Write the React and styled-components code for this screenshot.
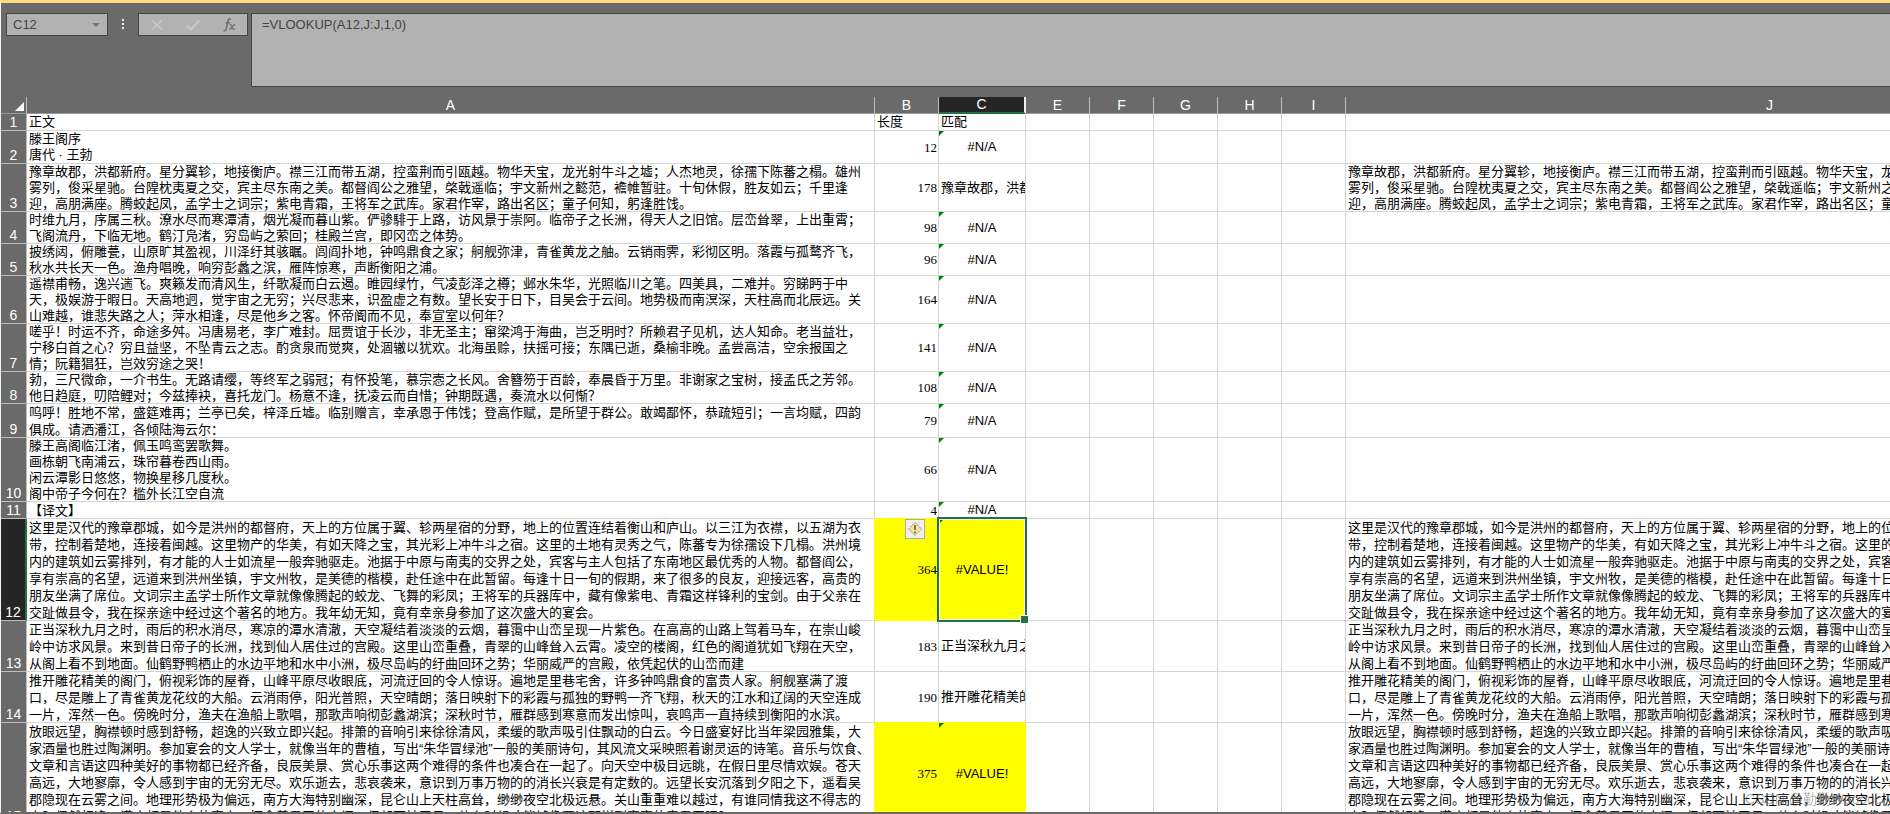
import React from "react";
import styled, { createGlobalStyle, css } from "styled-components";

const GlobalStyle = createGlobalStyle`
  * { box-sizing: border-box; }
  html, body { margin: 0; padding: 0; }
  body {
    overflow: hidden;
    background: #6a6a6a;
    font-family: "Liberation Sans", "Noto Sans CJK SC", sans-serif;
    font-size: 13px;
  }
`;

const LINE = "#d4d4d4";

const App_ = styled.div`
  display: flex;
  flex-direction: column;
  height: 100vh;
  border-left: 1px solid #f4f4f4;
  border-top: 3px solid #ffdc7d;
  border-bottom: 2px solid #6a6a6a;
  overflow: hidden;
`;

const FormulaBar = styled.header`
  display: flex;
  align-items: flex-start;
  flex: none;
  height: 94px;
  padding: 10px 0 0 5px;
  background: #6a6a6a;
`;

const BoxFrame = css`
  border: 1px solid #444;
  background: #b2b2b2;
`;

const NameBox = styled.div`
  ${BoxFrame}
  display: flex;
  align-items: center;
  width: 102px;
  height: 23px;
`;

const NameInput = styled.input`
  flex: 1;
  min-width: 0;
  height: 21px;
  padding: 0 0 0 6px;
  border: 0;
  outline: 0;
  background: transparent;
  color: #444;
  font: 13px "Liberation Sans", sans-serif;
`;

const IconButton = styled.button`
  display: flex;
  align-items: center;
  justify-content: center;
  width: ${(p) => p.$w}px;
  height: 21px;
  padding: 0;
  border: 0;
  background: transparent;
`;

const Grip = styled.div`
  display: flex;
  flex-direction: column;
  align-items: center;
  gap: 2px;
  width: 30px;
  padding-top: 6px;
  i { width: 2px; height: 2px; background: #eee; }
`;

const Tools = styled.div`
  ${BoxFrame}
  display: flex;
  width: 110px;
  height: 23px;
`;

const FormulaInput = styled.textarea`
  ${BoxFrame}
  flex: 1;
  height: 74px;
  margin-left: 3px;
  padding: 2px 10px;
  border-right: 0;
  outline: 0;
  resize: none;
  color: #444;
  font: 13px/17px "Liberation Sans", sans-serif;
`;

const SheetArea = styled.main`
  flex: 1;
  min-height: 0;
  overflow: hidden;
  background: #fff;
`;

const Grid = styled.table`
  width: 2167px;
  table-layout: fixed;
  border-collapse: separate;
  border-spacing: 0;
`;

const ColHead = styled.th`
  height: 17px;
  padding: 0;
  border-right: 1px solid #bdbdbd;
  border-bottom: 1px solid #9a9a9a;
  background: #6a6a6a;
  color: #fff;
  font-size: 14px;
  font-weight: 400;
  line-height: 16px;
  ${(p) => p.$active && css`
    background: #252525;
    border-right: 2px solid #f0f0f0;
    border-bottom: 2px solid #217346;
    line-height: 15px;
  `}
`;

const Corner = styled.th`
  padding: 0;
  border-right: 1px solid #bdbdbd;
  border-bottom: 1px solid #9a9a9a;
  background: #6a6a6a;
  svg { display: block; margin: 2px 0 0 14px; }
`;

const RowHead = styled.th`
  height: ${(p) => p.$h}px;
  padding: 0;
  border-right: 1px solid #bdbdbd;
  border-bottom: 1px solid #bdbdbd;
  background: #6a6a6a;
  color: #fff;
  font-size: 14px;
  font-weight: 400;
  line-height: 16px;
  vertical-align: bottom;
  ${(p) => p.$active && css`
    background: #252525;
    border-right: 2px solid #217346;
  `}
`;

const Cell = styled.td`
  position: relative;
  padding: 0;
  border-right: 1px solid ${LINE};
  border-bottom: 1px solid ${LINE};
  color: #000;
  vertical-align: middle;
  ${(p) => p.$filled && css`
    background: #ff0;
    border-color: #ff0;
    box-shadow: -1px -1px 0 #ff0;
  `}
`;

const Content = styled.div`
  max-height: ${(p) => p.$h - 1}px;
  padding: 0 2px;
  overflow: hidden;
  white-space: pre;
  line-height: ${(p) => p.$line || 16}px;
  text-align: ${(p) => p.$align || "left"};
  text-spacing-trim: space-all;
`;

const Passage = styled(Content)`
  height: ${(p) => p.$h - 1}px;
`;

const Count = styled(Content)`
  padding: 1px 1px 0;
  font-family: "Liberation Serif", serif;
  text-align: right;
`;

const ErrorFlag = styled.i`
  position: absolute;
  top: 0;
  left: 0;
  border-top: 5px solid #008000;
  border-right: 5px solid transparent;
`;

const Selection = styled.div`
  position: absolute;
  inset: -2px;
  border: 2px solid #217346;
  box-shadow: inset 0 0 0 1px #fff;
  z-index: 2;
  &::after {
    content: "";
    position: absolute;
    right: -4px;
    bottom: -4px;
    width: 7px;
    height: 7px;
    border: 1px solid #fff;
    background: #217346;
  }
`;

const SmartTag = styled.button`
  position: absolute;
  top: 0;
  left: 30px;
  display: flex;
  align-items: center;
  justify-content: center;
  width: 20px;
  height: 20px;
  padding: 0;
  border: 1px solid #ababab;
  background: #f0f0f0;
`;

const Watermark = styled.div`
  position: fixed;
  right: 8px;
  bottom: 6px;
  color: rgba(120, 120, 120, 0.55);
  font-size: 14px;
  line-height: 18px;
`;

const t = (...lines) => lines.join("\n");

const p3 = t(
  "豫章故郡，洪都新府。星分翼轸，地接衡庐。襟三江而带五湖，控蛮荆而引瓯越。物华天宝，龙光射牛斗之墟；人杰地灵，徐孺下陈蕃之榻。雄州",
  "雾列，俊采星驰。台隍枕夷夏之交，宾主尽东南之美。都督阎公之雅望，棨戟遥临；宇文新州之懿范，襜帷暂驻。十旬休假，胜友如云；千里逢",
  "迎，高朋满座。腾蛟起凤，孟学士之词宗；紫电青霜，王将军之武库。家君作宰，路出名区；童子何知，躬逢胜饯。"
);
const p12 = t(
  "这里是汉代的豫章郡城，如今是洪州的都督府，天上的方位属于翼、轸两星宿的分野，地上的位置连结着衡山和庐山。以三江为衣襟，以五湖为衣",
  "带，控制着楚地，连接着闽越。这里物产的华美，有如天降之宝，其光彩上冲牛斗之宿。这里的土地有灵秀之气，陈蕃专为徐孺设下几榻。洪州境",
  "内的建筑如云雾排列，有才能的人士如流星一般奔驰驱走。池据于中原与南夷的交界之处，宾客与主人包括了东南地区最优秀的人物。都督阎公，",
  "享有崇高的名望，远道来到洪州坐镇，宇文州牧，是美德的楷模，赴任途中在此暂留。每逢十日一旬的假期，来了很多的良友，迎接远客，高贵的",
  "朋友坐满了席位。文词宗主孟学士所作文章就像像腾起的蛟龙、飞舞的彩凤；王将军的兵器库中，藏有像紫电、青霜这样锋利的宝剑。由于父亲在",
  "交趾做县令，我在探亲途中经过这个著名的地方。我年幼无知，竟有幸亲身参加了这次盛大的宴会。"
);
const p13 = t(
  "正当深秋九月之时，雨后的积水消尽，寒凉的潭水清澈，天空凝结着淡淡的云烟，暮霭中山峦呈现一片紫色。在高高的山路上驾着马车，在崇山峻",
  "岭中访求风景。来到昔日帝子的长洲，找到仙人居住过的宫殿。这里山峦重叠，青翠的山峰耸入云霄。凌空的楼阁，红色的阁道犹如飞翔在天空，",
  "从阁上看不到地面。仙鹤野鸭栖止的水边平地和水中小洲，极尽岛屿的纡曲回环之势；华丽威严的宫殿，依凭起伏的山峦而建"
);
const p14 = t(
  "推开雕花精美的阁门，俯视彩饰的屋脊，山峰平原尽收眼底，河流迂回的令人惊讶。遍地是里巷宅舍，许多钟鸣鼎食的富贵人家。舸舰塞满了渡",
  "口，尽是雕上了青雀黄龙花纹的大船。云消雨停，阳光普照，天空晴朗；落日映射下的彩霞与孤独的野鸭一齐飞翔，秋天的江水和辽阔的天空连成",
  "一片，浑然一色。傍晚时分，渔夫在渔船上歌唱，那歌声响彻彭蠡湖滨；深秋时节，雁群感到寒意而发出惊叫，哀鸣声一直持续到衡阳的水滨。"
);
const p15 = t(
  "放眼远望，胸襟顿时感到舒畅，超逸的兴致立即兴起。排箫的音响引来徐徐清风，柔缓的歌声吸引住飘动的白云。今日盛宴好比当年梁园雅集，大",
  "家酒量也胜过陶渊明。参加宴会的文人学士，就像当年的曹植，写出“朱华冒绿池”一般的美丽诗句，其风流文采映照着谢灵运的诗笔。音乐与饮食、",
  "文章和言语这四种美好的事物都已经齐备，良辰美景、赏心乐事这两个难得的条件也凑合在一起了。向天空中极目远眺，在假日里尽情欢娱。苍天",
  "高远，大地寥廓，令人感到宇宙的无穷无尽。欢乐逝去，悲哀袭来，意识到万事万物的的消长兴衰是有定数的。远望长安沉落到夕阳之下，遥看吴",
  "郡隐现在云雾之间。地理形势极为偏远，南方大海特别幽深，昆仑山上天柱高耸，缈缈夜空北极远悬。关山重重难以越过，有谁同情我这不得志的",
  "人？偶然相逢，满座都是他乡的客人。怀念着君王的宫门，但却不被召见，什么时候才能够像贾谊那样到宣室侍奉君王呢？"
);

const rows = [
  { h: 17, a: "正文", bText: "长度", cText: "匹配" },
  { h: 33, a: t("滕王阁序", "唐代 · 王勃"), b: 12, c: "#N/A" },
  { h: 48, a: p3, b: 178, cText: "豫章故郡，洪都新府。", j: p3 },
  {
    h: 32, b: 98, c: "#N/A",
    a: t(
      "时维九月，序属三秋。潦水尽而寒潭清，烟光凝而暮山紫。俨骖騑于上路，访风景于崇阿。临帝子之长洲，得天人之旧馆。层峦耸翠，上出重霄；",
      "飞阁流丹，下临无地。鹤汀凫渚，穷岛屿之萦回；桂殿兰宫，即冈峦之体势。"
    ),
  },
  {
    h: 32, b: 96, c: "#N/A",
    a: t(
      "披绣闼，俯雕甍，山原旷其盈视，川泽纡其骇瞩。闾阎扑地，钟鸣鼎食之家；舸舰弥津，青雀黄龙之舳。云销雨霁，彩彻区明。落霞与孤鹜齐飞，",
      "秋水共长天一色。渔舟唱晚，响穷彭蠡之滨，雁阵惊寒，声断衡阳之浦。"
    ),
  },
  {
    h: 48, b: 164, c: "#N/A",
    a: t(
      "遥襟甫畅，逸兴遄飞。爽籁发而清风生，纤歌凝而白云遏。睢园绿竹，气凌彭泽之樽；邺水朱华，光照临川之笔。四美具，二难并。穷睇眄于中",
      "天，极娱游于暇日。天高地迥，觉宇宙之无穷；兴尽悲来，识盈虚之有数。望长安于日下，目吴会于云间。地势极而南溟深，天柱高而北辰远。关",
      "山难越，谁悲失路之人；萍水相逢，尽是他乡之客。怀帝阍而不见，奉宣室以何年？"
    ),
  },
  {
    h: 48, b: 141, c: "#N/A",
    a: t(
      "嗟乎！时运不齐，命途多舛。冯唐易老，李广难封。屈贾谊于长沙，非无圣主；窜梁鸿于海曲，岂乏明时？所赖君子见机，达人知命。老当益壮，",
      "宁移白首之心？穷且益坚，不坠青云之志。酌贪泉而觉爽，处涸辙以犹欢。北海虽赊，扶摇可接；东隅已逝，桑榆非晚。孟尝高洁，空余报国之",
      "情；阮籍猖狂，岂效穷途之哭！"
    ),
  },
  {
    h: 32, b: 108, c: "#N/A",
    a: t(
      "勃，三尺微命，一介书生。无路请缨，等终军之弱冠；有怀投笔，慕宗悫之长风。舍簪笏于百龄，奉晨昏于万里。非谢家之宝树，接孟氏之芳邻。",
      "他日趋庭，叨陪鲤对；今兹捧袂，喜托龙门。杨意不逢，抚凌云而自惜；钟期既遇，奏流水以何惭？"
    ),
  },
  {
    h: 34, line: 17, b: 79, c: "#N/A",
    a: t(
      "呜呼！胜地不常，盛筵难再；兰亭已矣，梓泽丘墟。临别赠言，幸承恩于伟饯；登高作赋，是所望于群公。敢竭鄙怀，恭疏短引；一言均赋，四韵",
      "俱成。请洒潘江，各倾陆海云尔："
    ),
  },
  {
    h: 64, b: 66, c: "#N/A",
    a: t(
      "滕王高阁临江渚，佩玉鸣鸾罢歌舞。",
      "画栋朝飞南浦云，珠帘暮卷西山雨。",
      "闲云潭影日悠悠，物换星移几度秋。",
      "阁中帝子今何在？槛外长江空自流"
    ),
  },
  { h: 17, line: 17, a: "【译文】", b: 4, c: "#N/A" },
  { h: 102, line: 17, a: p12, b: 364, c: "#VALUE!", j: p12, filled: true, selected: true },
  { h: 51, line: 17, a: p13, b: 183, cText: "正当深秋九月之时，", j: p13 },
  { h: 51, line: 17, a: p14, b: 190, cText: "推开雕花精美的阁门，", j: p14 },
  { h: 102, line: 17, a: p15, b: 375, c: "#VALUE!", j: p15, filled: true },
];

const columns = [
  ["A", 848], ["B", 64], ["C", 87], ["E", 64], ["F", 64], ["G", 64], ["H", 64], ["I", 64], ["J", 848],
];

function SheetRow({ row, index }) {
  const { h, line, filled, selected } = row;
  return (
    <tr>
      <RowHead scope="row" $h={h} $active={selected}>{index}</RowHead>
      <Cell><Passage $h={h} $line={line}>{row.a}</Passage></Cell>
      <Cell $filled={filled}>
        {row.bText ? <Content $h={h}>{row.bText}</Content> : <Count $h={h}>{row.b}</Count>}
        {selected && (
          <SmartTag type="button" aria-label="Error checking options">
            <svg width="16" height="16" viewBox="0 0 16 16">
              <path d="M8 1.5 14.5 8 8 14.5 1.5 8Z" fill="#f7e29a" stroke="#9c8b5a" strokeDasharray="2 1" />
              <path d="M8 4v5M8 10.5v2" stroke="#777" strokeWidth="2" />
            </svg>
          </SmartTag>
        )}
      </Cell>
      <Cell $filled={filled}>
        {row.cText
          ? <Content $h={h}>{row.cText}</Content>
          : <Content $h={h} $align="center">{row.c}</Content>}
        {row.c && <ErrorFlag />}
        {selected && <Selection />}
      </Cell>
      <Cell /><Cell /><Cell /><Cell /><Cell />
      <Cell>{row.j && <Passage $h={h} $line={line}>{row.j}</Passage>}</Cell>
    </tr>
  );
}

export default function App() {
  return (
    <App_>
      <GlobalStyle />
      <FormulaBar>
        <NameBox>
          <NameInput aria-label="Name box" defaultValue="C12" />
          <IconButton type="button" aria-label="Open name list" $w={22}>
            <svg width="8" height="4" viewBox="0 0 8 4"><path d="M0 0h8L4 4Z" fill="#777" /></svg>
          </IconButton>
        </NameBox>
        <Grip><i /><i /><i /></Grip>
        <Tools>
          <IconButton type="button" aria-label="Cancel" $w={36}>
            <svg width="12" height="12" viewBox="0 0 12 12"><path d="M1 1.5 11 10.5M10.500 1.500 1.500 10.500" stroke="#c6c6c6" strokeWidth="1.800" /></svg>
          </IconButton>
          <IconButton type="button" aria-label="Enter" $w={36}>
            <svg width="14" height="12" viewBox="0 0 14 12"><path d="M1 6.500 5 10.500 13 1.500" fill="none" stroke="#c6c6c6" strokeWidth="2.400" /></svg>
          </IconButton>
          <IconButton type="button" aria-label="Insert function" $w={36}>
            <svg width="13" height="14" viewBox="0 0 13 14" fill="none" stroke="#707070">
              <path d="M8 1.500C6.500.500 5.400 1.200 5 3L3.300 10.500C3 12.300 2 13.200.500 12.600M2.500 4.800H7" strokeWidth="1.500" />
              <path d="M6.500 7C8 6.200 8.600 7 9 8.600 9.400 10.500 10 11.600 11.600 10.800M12.200 6.800C10.500 6.300 9.600 8 8.800 9.300 8 10.700 7.200 11.500 6 11" strokeWidth="1.300" />
            </svg>
          </IconButton>
        </Tools>
        <FormulaInput aria-label="Formula" defaultValue="=VLOOKUP(A12,J:J,1,0)" />
      </FormulaBar>
      <SheetArea>
        <Grid>
          <colgroup>
            {[["n", 26 - 0], ...columns].map(([name, w]) => <col key={name} width={w} />)}
          </colgroup>
          <thead>
            <tr>
              <Corner aria-label="Select all">
                <svg width="9" height="9" viewBox="0 0 9 9"><path d="M9 0V9H0Z" fill="#fff" /></svg>
              </Corner>
              {columns.map(([name]) => (
                <ColHead key={name} scope="col" $active={name === "C"}>{name}</ColHead>
              ))}
            </tr>
          </thead>
          <tbody>
            {rows.map((row, i) => <SheetRow key={i} row={row} index={i + 1} />)}
          </tbody>
        </Grid>
      </SheetArea>
      <Watermark>CSDN @勤勤Wooooc</Watermark>
    </App_>
  );
}
